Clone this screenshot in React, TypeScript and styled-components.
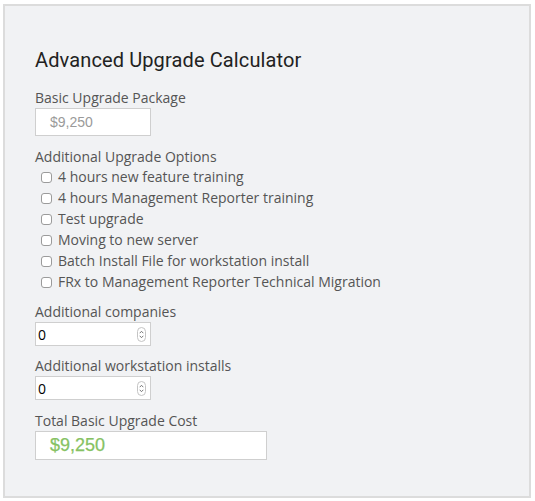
import React from "react";
import styled, { createGlobalStyle } from "styled-components";

const Global = createGlobalStyle`
  html, body { margin: 0; padding: 0; background: #ffffff; }
  body { font-family: "Open Sans", "Liberation Sans", sans-serif; }
`;

const Panel = styled.section`
  box-sizing: border-box;
  width: 528px;
  margin: 4px 0 0 3px;
  padding: 42px 30px 36px;
  background: #f1f2f4;
  border: 2px solid #dcdcdc;
  display: flex;
  flex-direction: column;
`;

const Title = styled.h2`
  margin: 0 0 16px;
  font-family: Roboto, "Liberation Sans", sans-serif;
  font-weight: 400;
  font-size: 20px;
  letter-spacing: 0.12px;
  line-height: 24px;
  color: #222;
`;

const Group = styled.div<{ $gap?: number }>`
  display: flex;
  flex-direction: column;
  align-items: flex-start;
  margin-top: ${(p) => p.$gap ?? 0}px;
`;

const Label = styled.label`
  font-size: 14px;
  line-height: 20px;
  color: #555;
`;

const PriceBox = styled.div<{ $wide?: boolean; $green?: boolean }>`
  box-sizing: border-box;
  width: ${(p) => (p.$wide ? 232 : 116)}px;
  height: ${(p) => (p.$wide ? 29 : 28)}px;
  background: #fff;
  border: 1px solid #cfcfcf;
  padding-left: 14px;
  display: flex;
  align-items: center;
  font-family: "Liberation Sans", Arial, sans-serif;
  font-size: ${(p) => (p.$green ? 18 : 14)}px;
  color: ${(p) => (p.$green ? "#86c263" : "#9a9a9a")};
  -webkit-text-stroke: ${(p) => (p.$green ? "0.25px #86c263" : "0")};
`;

const OptionList = styled.ul`
  list-style: none;
  margin: -1px 0 0;
  padding: 0 0 0 6px;
`;

const Option = styled.li`
  display: flex;
  align-items: center;
  gap: 6px;
  height: 21px;
  font-size: 14px;
  color: #555;
`;

const Check = styled.input`
  appearance: none;
  margin: 1px 0 0;
  width: 11px;
  height: 11px;
  border: 1px solid #9b9b9b;
  border-radius: 3px;
  background: #fff;
  box-sizing: border-box;
`;

const NumberBox = styled.div`
  box-sizing: border-box;
  width: 116px;
  height: 24px;
  background: #fff;
  border: 1px solid #cfcfcf;
  display: flex;
  align-items: center;
  padding: 0 4px 0 2px;
`;

const NumberInput = styled.input`
  flex: 1;
  min-width: 0;
  border: none;
  outline: none;
  background: transparent;
  padding: 0;
  font-family: "Open Sans", "Liberation Sans", sans-serif;
  font-size: 14px;
  color: #000;
`;

const Spinner = styled.span`
  box-sizing: border-box;
  width: 9px;
  height: 15px;
  border: 1px solid #c4c4c4;
  border-radius: 5px;
  display: flex;
  align-items: center;
  justify-content: center;
`;

const SpinIcon = () => (
  <svg width="5" height="9" viewBox="0 0 5 9" fill="none" stroke="#666" strokeWidth="0.9">
    <path d="M0.7 3.2 L2.5 1.3 L4.3 3.2" />
    <path d="M0.7 5.8 L2.5 7.7 L4.3 5.8" />
  </svg>
);

const options = [
  "4 hours new feature training",
  "4 hours Management Reporter training",
  "Test upgrade",
  "Moving to new server",
  "Batch Install File for workstation install",
  "FRx to Management Reporter Technical Migration",
];

const NumberField = ({ id }: { id: string }) => (
  <NumberBox>
    <NumberInput id={id} type="text" defaultValue="0" />
    <Spinner>
      <SpinIcon />
    </Spinner>
  </NumberBox>
);

export default function App() {
  return (
    <>
      <Global />
      <Panel>
        <Title>Advanced Upgrade Calculator</Title>
        <Group>
          <Label>Basic Upgrade Package</Label>
          <PriceBox>$9,250</PriceBox>
        </Group>
        <Group $gap={11}>
          <Label>Additional Upgrade Options</Label>
          <OptionList>
            {options.map((o) => (
              <Option key={o}>
                <Check type="checkbox" />
                <span>{o}</span>
              </Option>
            ))}
          </OptionList>
        </Group>
        <Group $gap={10}>
          <Label htmlFor="companies">Additional companies</Label>
          <NumberField id="companies" />
        </Group>
        <Group $gap={10}>
          <Label htmlFor="workstations">Additional workstation installs</Label>
          <NumberField id="workstations" />
        </Group>
        <Group $gap={11}>
          <Label>Total Basic Upgrade Cost</Label>
          <PriceBox $wide $green>$9,250</PriceBox>
        </Group>
      </Panel>
    </>
  );
}
